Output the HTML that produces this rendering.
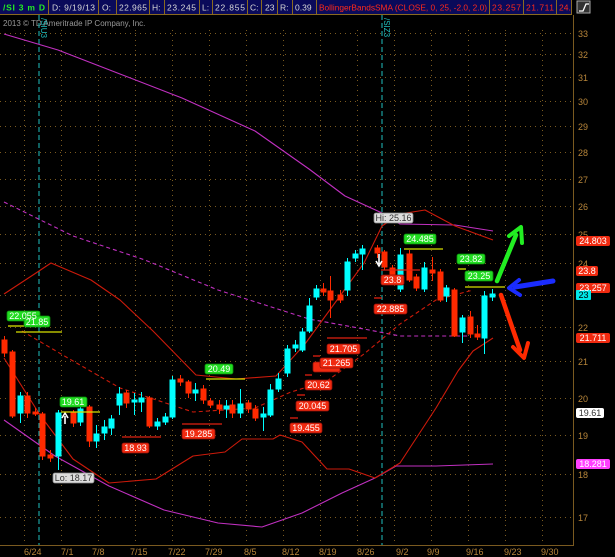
<!DOCTYPE html>
<html><head><meta charset="utf-8"><style>
html,body{margin:0;padding:0;background:#000;width:615px;height:557px;overflow:hidden}
svg{display:block}
text{font-family:"Liberation Sans",sans-serif}
</style></head><body>
<svg width="615" height="557" viewBox="0 0 615 557" xmlns="http://www.w3.org/2000/svg">
<rect width="615" height="557" fill="#000"/>
<!-- header -->
<g font-size="8.5" >
<rect x="0" y="0" width="572" height="14" fill="#0a0a5a"/>
<g stroke="#8a6a20" stroke-width="1">
<line x1="0" y1="14.5" x2="572" y2="14.5"/>
<line x1="48.5" y1="0" x2="48.5" y2="14"/><line x1="98.5" y1="0" x2="98.5" y2="14"/>
<line x1="116.5" y1="0" x2="116.5" y2="14"/><line x1="149.5" y1="0" x2="149.5" y2="14"/>
<line x1="164.5" y1="0" x2="164.5" y2="14"/><line x1="199.5" y1="0" x2="199.5" y2="14"/>
<line x1="212.5" y1="0" x2="212.5" y2="14"/><line x1="247.5" y1="0" x2="247.5" y2="14"/>
<line x1="261.5" y1="0" x2="261.5" y2="14"/><line x1="277.5" y1="0" x2="277.5" y2="14"/>
<line x1="292.5" y1="0" x2="292.5" y2="14"/><line x1="316.5" y1="0" x2="316.5" y2="14"/>
<line x1="489.5" y1="0" x2="489.5" y2="14"/><line x1="523.5" y1="0" x2="523.5" y2="14"/>
<line x1="556.5" y1="0" x2="556.5" y2="14"/><line x1="571.5" y1="0" x2="571.5" y2="14"/>
</g>
<text x="3" y="10.5" fill="#22ee22" font-weight="bold" textLength="42">/SI 3 m D</text>
<g fill="#d8d8d8">
<text x="52" y="10.5" textLength="43">D: 9/19/13</text><text x="102" y="10.5">O:</text><text x="119" y="10.5" textLength="28">22.965</text>
<text x="152" y="10.5">H:</text><text x="167" y="10.5" textLength="29">23.245</text><text x="202" y="10.5">L:</text>
<text x="215" y="10.5" textLength="30">22.855</text><text x="250" y="10.5">C:</text><text x="265" y="10.5">23</text>
<text x="280" y="10.5">R:</text><text x="295" y="10.5">0.39</text></g>
<g fill="#ff2a1a"><text x="319" y="10.5" textLength="168" lengthAdjust="spacingAndGlyphs">BollingerBandsSMA (CLOSE, 0, 25, -2.0, 2.0)</text>
<text x="492" y="10.5" textLength="29">23.257</text><text x="526" y="10.5" textLength="28">21.711</text><text x="559" y="10.5">24.</text></g>
<rect x="577" y="1" width="13" height="12" fill="#333" stroke="#aaa" stroke-width="1"/>
<path d="M579 11 L583 11 L586 4 L589 4" stroke="#fff" fill="none" stroke-width="1.3"/>
</g>
<text x="3" y="26" fill="#999" font-size="8">2013 © TD Ameritrade IP Company, Inc.</text>
<!-- grid -->
<g stroke="#7a5a20" stroke-width="1" stroke-dasharray="1,4">
<line x1="0" y1="33.5" x2="573" y2="33.5"/><line x1="0" y1="54.5" x2="573" y2="54.5"/>
<line x1="0" y1="77.5" x2="573" y2="77.5"/><line x1="0" y1="101.5" x2="573" y2="101.5"/>
<line x1="0" y1="126.5" x2="573" y2="126.5"/><line x1="0" y1="152.5" x2="573" y2="152.5"/>
<line x1="0" y1="179.5" x2="573" y2="179.5"/><line x1="0" y1="206.5" x2="573" y2="206.5"/>
<line x1="0" y1="234.5" x2="573" y2="234.5"/><line x1="0" y1="263.5" x2="573" y2="263.5"/>
<line x1="0" y1="295.5" x2="573" y2="295.5"/><line x1="0" y1="327.5" x2="573" y2="327.5"/>
<line x1="0" y1="361.5" x2="573" y2="361.5"/><line x1="0" y1="398.5" x2="573" y2="398.5"/>
<line x1="0" y1="435.5" x2="573" y2="435.5"/><line x1="0" y1="474.5" x2="573" y2="474.5"/>
<line x1="0" y1="517.5" x2="573" y2="517.5"/>
<line x1="24.5" y1="30" x2="24.5" y2="545"/><line x1="61.5" y1="30" x2="61.5" y2="545"/>
<line x1="98.5" y1="30" x2="98.5" y2="545"/><line x1="135.5" y1="30" x2="135.5" y2="545"/>
<line x1="172.5" y1="30" x2="172.5" y2="545"/><line x1="209.5" y1="30" x2="209.5" y2="545"/>
<line x1="246.5" y1="30" x2="246.5" y2="545"/><line x1="283.5" y1="30" x2="283.5" y2="545"/>
<line x1="320.5" y1="30" x2="320.5" y2="545"/><line x1="357.5" y1="30" x2="357.5" y2="545"/>
<line x1="394.5" y1="30" x2="394.5" y2="545"/><line x1="431.5" y1="30" x2="431.5" y2="545"/>
<line x1="468.5" y1="30" x2="468.5" y2="545"/><line x1="505.5" y1="30" x2="505.5" y2="545"/>
<line x1="542.5" y1="30" x2="542.5" y2="545"/>
</g>
<!-- axes -->
<g stroke="#7a5a20" stroke-width="1">
<line x1="573.5" y1="15" x2="573.5" y2="546"/><line x1="0" y1="545.5" x2="574" y2="545.5"/>
</g>
<g fill="#b8863a" font-size="9">
<text x="578" y="37">33</text><text x="578" y="58">32</text><text x="578" y="81">31</text><text x="578" y="105">30</text>
<text x="578" y="130">29</text><text x="578" y="156">28</text><text x="578" y="183">27</text><text x="578" y="210">26</text>
<text x="578" y="238">25</text><text x="578" y="267">24</text><text x="578" y="331">22</text><text x="578" y="365">21</text>
<text x="578" y="402">20</text><text x="578" y="439">19</text><text x="578" y="478">18</text><text x="578" y="521">17</text>
<text x="24" y="555">6/24</text><text x="61" y="555">7/1</text><text x="92" y="555">7/8</text><text x="130" y="555">7/15</text>
<text x="168" y="555">7/22</text><text x="205" y="555">7/29</text><text x="244" y="555">8/5</text><text x="282" y="555">8/12</text>
<text x="319" y="555">8/19</text><text x="357" y="555">8/26</text><text x="396" y="555">9/2</text><text x="427" y="555">9/9</text>
<text x="466" y="555">9/16</text><text x="504" y="555">9/23</text><text x="541" y="555">9/30</text>
</g>
<!-- expiry verticals -->
<g stroke="#1aa0a0" stroke-width="1.2" stroke-dasharray="5,3">
<line x1="39" y1="15" x2="39" y2="545"/><line x1="382" y1="15" x2="382" y2="545"/>
</g>
<text transform="translate(41,18) rotate(90)" fill="#20c0c0" font-size="8">/SIU3</text>
<text transform="translate(384,18) rotate(90)" fill="#20c0c0" font-size="8">/SIZ3</text>
<!-- lines -->
<g fill="none" stroke-width="1.1" stroke-linejoin="round">
<polyline stroke="#c030c0" points="4,34 58,50 120,74 182,98 255,131 309,169 345,196 382,213 400,224 455,225 493,231"/>
<polyline stroke="#c030c0" points="4,420 55,456 109,486 164,510 218,523 262,527 302,513 342,493 375,478 396,466 436,466 493,464"/>
<polyline stroke="#c030c0" stroke-dasharray="4,3" points="4,202 73,236 145,260 218,290 309,319 364,329 400,336 455,336 470,336"/>
<polyline stroke="#cc1a0a" points="4,294 36,273 51,263 91,280 120,300 153,331 196,375 236,379 276,376 305,344 364,263 382,226 400,214 425,210 455,226 493,240"/>
<polyline stroke="#cc1a0a" points="4,358 40,415 73,459 109,483 156,479 193,456 225,452 242,439 273,439 280,435 302,442 327,469 349,469 375,478 400,463 436,408 458,371 473,351 493,338"/>
<polyline stroke="#cc1a0a" stroke-dasharray="4,3" points="22,331 73,361 120,388 193,412 255,408 291,392 327,381 364,354 400,324 436,300 473,290"/>
</g>
<!-- candles -->
<g stroke-width="1">
<g fill="#ff2a00" stroke="#ff2a00">
<line x1="4.5" y1="336" x2="4.5" y2="357"/><rect x="2" y="340" width="5" height="13"/>
<line x1="12.5" y1="350" x2="12.5" y2="418"/><rect x="10" y="352" width="5" height="64"/>
<line x1="27.5" y1="392" x2="27.5" y2="418"/><rect x="25" y="396" width="5" height="17"/>
<line x1="35.5" y1="408" x2="35.5" y2="416"/><rect x="33" y="412" width="5" height="2"/>
<line x1="42.5" y1="412" x2="42.5" y2="460"/><rect x="40" y="414" width="5" height="42"/>
<line x1="50.5" y1="450" x2="50.5" y2="462"/><rect x="48" y="455" width="5" height="3"/>
<line x1="73.5" y1="410" x2="73.5" y2="427"/><rect x="71" y="413" width="5" height="10"/>
<line x1="89.5" y1="405" x2="89.5" y2="447"/><rect x="87" y="407" width="5" height="34"/>
<line x1="126.5" y1="390" x2="126.5" y2="408"/><rect x="124" y="393" width="5" height="10"/>
<line x1="149.5" y1="396" x2="149.5" y2="428"/><rect x="147" y="398" width="5" height="28"/>
<line x1="180.5" y1="375" x2="180.5" y2="386"/><rect x="178" y="379" width="5" height="3"/>
<line x1="188.5" y1="380" x2="188.5" y2="398"/><rect x="186" y="382" width="5" height="11"/>
<line x1="203.5" y1="385" x2="203.5" y2="404"/><rect x="201" y="389" width="5" height="11"/>
<line x1="210.5" y1="398" x2="210.5" y2="408"/><rect x="208" y="401" width="5" height="4"/>
<line x1="219.5" y1="400" x2="219.5" y2="414"/><rect x="217" y="405" width="5" height="4"/>
<line x1="232.5" y1="400" x2="232.5" y2="418"/><rect x="230" y="405" width="5" height="8"/>
<line x1="248.5" y1="400" x2="248.5" y2="413"/><rect x="246" y="403" width="5" height="6"/>
<line x1="255.5" y1="405" x2="255.5" y2="421"/><rect x="253" y="409" width="5" height="9"/>
<line x1="323.5" y1="283" x2="323.5" y2="296"/><rect x="321" y="289" width="5" height="3"/>
<line x1="330.5" y1="276" x2="330.5" y2="318"/><rect x="328" y="291" width="5" height="9"/>
<line x1="340.5" y1="290" x2="340.5" y2="303"/><rect x="338" y="295" width="5" height="5"/>
<line x1="377.5" y1="245" x2="377.5" y2="258"/><rect x="375" y="248" width="5" height="5"/>
<line x1="384.5" y1="250" x2="384.5" y2="270"/><rect x="382" y="252" width="5" height="15"/>
<line x1="392.5" y1="265" x2="392.5" y2="282"/><rect x="390" y="268" width="5" height="9"/>
<line x1="409.5" y1="250" x2="409.5" y2="282"/><rect x="407" y="254" width="5" height="26"/>
<line x1="416.5" y1="274" x2="416.5" y2="291"/><rect x="414" y="277" width="5" height="11"/>
<line x1="432.5" y1="257" x2="432.5" y2="281"/><rect x="430" y="270" width="5" height="3"/>
<line x1="440.5" y1="269" x2="440.5" y2="302"/><rect x="438" y="272" width="5" height="28"/>
<line x1="454.5" y1="288" x2="454.5" y2="337"/><rect x="452" y="290" width="5" height="46"/>
<line x1="470.5" y1="311" x2="470.5" y2="338"/><rect x="468" y="317" width="5" height="17"/>
<line x1="477.5" y1="325" x2="477.5" y2="340"/><rect x="475" y="334" width="5" height="3"/>
</g>
<g fill="#00ffff" stroke="#00ffff">
<line x1="20.5" y1="392" x2="20.5" y2="423"/><rect x="18" y="396" width="5" height="17"/>
<line x1="58.5" y1="410" x2="58.5" y2="470"/><rect x="56" y="413" width="5" height="43"/>
<line x1="80.5" y1="405" x2="80.5" y2="426"/><rect x="78" y="409" width="5" height="13"/>
<line x1="96.5" y1="425" x2="96.5" y2="448"/><rect x="94" y="434" width="5" height="7"/>
<line x1="104.5" y1="420" x2="104.5" y2="440"/><rect x="102" y="427" width="5" height="6"/>
<line x1="111.5" y1="415" x2="111.5" y2="435"/><rect x="109" y="419" width="5" height="9"/>
<line x1="119.5" y1="387" x2="119.5" y2="415"/><rect x="117" y="394" width="5" height="11"/>
<line x1="134.5" y1="393" x2="134.5" y2="415"/><rect x="132" y="400" width="5" height="2"/>
<line x1="141.5" y1="392" x2="141.5" y2="412"/><rect x="139" y="398" width="5" height="4"/>
<line x1="157.5" y1="418" x2="157.5" y2="430"/><rect x="155" y="422" width="5" height="4"/>
<line x1="165.5" y1="413" x2="165.5" y2="425"/><rect x="163" y="417" width="5" height="5"/>
<line x1="172.5" y1="376" x2="172.5" y2="419"/><rect x="170" y="380" width="5" height="37"/>
<line x1="195.5" y1="383" x2="195.5" y2="401"/><rect x="193" y="390" width="5" height="3"/>
<line x1="226.5" y1="400" x2="226.5" y2="418"/><rect x="224" y="406" width="5" height="3"/>
<line x1="240.5" y1="389" x2="240.5" y2="418"/><rect x="238" y="404" width="5" height="9"/>
<line x1="263.5" y1="407" x2="263.5" y2="431"/><rect x="261" y="414" width="5" height="3"/>
<line x1="270.5" y1="384" x2="270.5" y2="417"/><rect x="268" y="390" width="5" height="25"/>
<line x1="278.5" y1="373" x2="278.5" y2="392"/><rect x="276" y="379" width="5" height="10"/>
<line x1="287.5" y1="345" x2="287.5" y2="377"/><rect x="285" y="349" width="5" height="24"/>
<line x1="295.5" y1="340" x2="295.5" y2="352"/><rect x="293" y="345" width="5" height="3"/>
<line x1="302.5" y1="328" x2="302.5" y2="352"/><rect x="300" y="332" width="5" height="18"/>
<line x1="309.5" y1="298" x2="309.5" y2="333"/><rect x="307" y="306" width="5" height="25"/>
<line x1="316.5" y1="285" x2="316.5" y2="300"/><rect x="314" y="289" width="5" height="8"/>
<line x1="347.5" y1="258" x2="347.5" y2="296"/><rect x="345" y="262" width="5" height="28"/>
<line x1="355.5" y1="250" x2="355.5" y2="262"/><rect x="353" y="254" width="5" height="4"/>
<line x1="362.5" y1="245" x2="362.5" y2="270"/><rect x="360" y="249" width="5" height="5"/>
<line x1="400.5" y1="248" x2="400.5" y2="292"/><rect x="398" y="255" width="5" height="34"/>
<line x1="424.5" y1="262" x2="424.5" y2="292"/><rect x="422" y="268" width="5" height="21"/>
<line x1="446.5" y1="285" x2="446.5" y2="302"/><rect x="444" y="288" width="5" height="8"/>
<line x1="462.5" y1="315" x2="462.5" y2="343"/><rect x="460" y="318" width="5" height="14"/>
<line x1="484.5" y1="291" x2="484.5" y2="354"/><rect x="482" y="296" width="5" height="42"/>
<line x1="492.5" y1="289" x2="492.5" y2="301"/><rect x="490" y="294" width="5" height="3"/>
</g>
</g>
<!-- white arrows -->
<path d="M65 424 L65 416 M62 418 L65 413 L68 418" stroke="#fff" stroke-width="1.6" fill="none"/>
<path d="M379 254 L379 264 M376 261 L379 266 L382 261" stroke="#fff" stroke-width="1.6" fill="none"/>
<!-- level lines -->
<g stroke="#d8e000" stroke-width="1.3">
<line x1="8" y1="326" x2="24" y2="326"/><line x1="16" y1="332" x2="62" y2="332"/>
<line x1="61" y1="412" x2="100" y2="412"/><line x1="206" y1="379" x2="245" y2="379"/>
<line x1="404" y1="249" x2="443" y2="249"/><line x1="458" y1="269" x2="466" y2="269"/>
<line x1="465" y1="287" x2="505" y2="287"/>
</g>
<g stroke="#e02010" stroke-width="1.3">
<line x1="122" y1="437" x2="161" y2="437"/><line x1="182" y1="424" x2="222" y2="424"/>
<line x1="290" y1="418" x2="298" y2="418"/><line x1="297" y1="395" x2="305" y2="395"/>
<line x1="305" y1="375" x2="312" y2="375"/><line x1="313" y1="356" x2="320" y2="356"/>
<line x1="327" y1="338" x2="367" y2="338"/><line x1="374" y1="298" x2="382" y2="298"/>
<line x1="381" y1="270" x2="420" y2="270"/>
</g>
<!-- bubbles -->
<g font-size="9" text-anchor="middle">
<g fill="#22dd22" stroke="#0a8a0a" stroke-width="0.8">
<rect x="7" y="311" width="33" height="10" rx="2"/><rect x="24" y="316" width="26" height="11" rx="2"/>
<rect x="60" y="397" width="27" height="10" rx="2"/><rect x="205" y="364" width="28" height="10" rx="2"/>
<rect x="404" y="234" width="32" height="10" rx="2"/><rect x="457" y="254" width="28" height="10" rx="2"/>
<rect x="465" y="271" width="28" height="10" rx="2"/>
</g>
<g fill="#fff">
<text x="23" y="319">22.055</text><text x="37" y="325">21.85</text><text x="73" y="405">19.61</text>
<text x="219" y="372">20.49</text><text x="420" y="242">24.485</text><text x="471" y="262">23.82</text><text x="479" y="279">23.25</text>
</g>
<g fill="#f02a10" stroke="#901008" stroke-width="0.8">
<rect x="122" y="443" width="27" height="10" rx="2"/><rect x="182" y="429" width="33" height="10" rx="2"/>
<rect x="290" y="423" width="32" height="10" rx="2"/><rect x="296" y="401" width="33" height="10" rx="2"/>
<rect x="305" y="380" width="27" height="10" rx="2"/><rect x="313" y="362" width="27" height="10" rx="2"/>
<rect x="320" y="358" width="33" height="10" rx="2"/><rect x="327" y="344" width="33" height="10" rx="2"/>
<rect x="374" y="304" width="33" height="10" rx="2"/><rect x="381" y="275" width="23" height="10" rx="2"/>
</g>
<g fill="#fff">
<text x="135.5" y="451">18.93</text><text x="198.5" y="437">19.285</text><text x="306" y="431">19.455</text>
<text x="312.5" y="409">20.045</text><text x="318.5" y="388">20.62</text><text x="336.5" y="366">21.265</text>
<text x="343.5" y="352">21.705</text><text x="390.5" y="312">22.885</text><text x="392.5" y="283">23.8</text>
</g>
<g fill="#ddd" stroke="#888" stroke-width="0.8">
<rect x="374" y="213" width="39" height="10" rx="2"/><rect x="53" y="473" width="41" height="10" rx="2"/>
</g>
<g fill="#333"><text x="393.5" y="221">Hi: 25.16</text><text x="73.5" y="481">Lo: 18.17</text></g>
<!-- right labels -->
<g fill="#f02a10">
<rect x="576" y="236" width="34" height="10" rx="2"/><rect x="576" y="266" width="22" height="10" rx="2"/>
<rect x="576" y="283" width="34" height="10" rx="2"/><rect x="576" y="333" width="34" height="10" rx="2"/>
</g>
<rect x="576" y="290" width="15" height="10" rx="1" fill="#00e8e8"/>
<rect x="576" y="408" width="28" height="10" rx="2" fill="#fff"/>
<rect x="576" y="459" width="34" height="10" rx="2" fill="#ff40ff"/>
<g fill="#fff"><text x="593" y="244">24.803</text><text x="587" y="274">23.8</text><text x="593" y="291">23.257</text>
<text x="593" y="341">21.711</text><text x="593" y="467">18.281</text></g>
<text x="583.5" y="298" fill="#000">23</text>
<text x="590" y="416" fill="#333">19.61</text>
</g>
<!-- big arrows -->
<g stroke-linecap="round" fill="none">
<path d="M497 281 L516 235" stroke="#22ee22" stroke-width="4.5"/>
<path d="M509 236 L521 227 L522 243" stroke="#22ee22" stroke-width="4" stroke-linejoin="round"/>
<path d="M553 281 L515 287" stroke="#1a2cff" stroke-width="5"/>
<path d="M519 280 L509 288 L520 295" stroke="#1a2cff" stroke-width="4" stroke-linejoin="round"/>
<path d="M501 295 L520 350" stroke="#ff2a00" stroke-width="4.5"/>
<path d="M513 347 L524 358 L528 343" stroke="#ff2a00" stroke-width="4" stroke-linejoin="round"/>
</g>
</svg>
</body></html>
